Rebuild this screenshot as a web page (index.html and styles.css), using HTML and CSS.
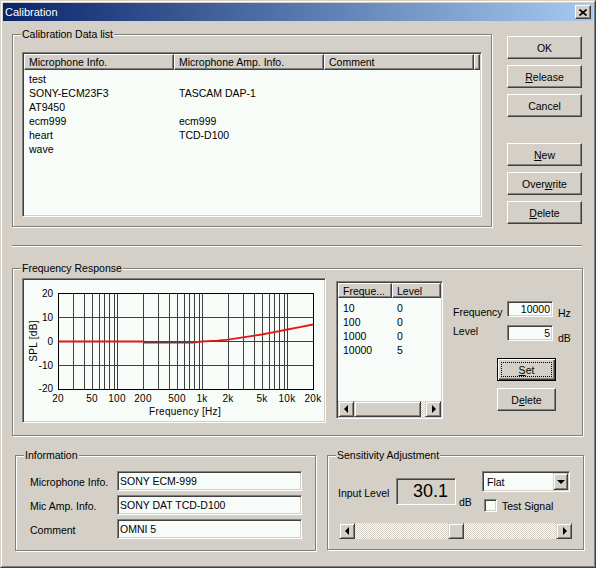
FILE: index.html
```html
<!DOCTYPE html>
<html lang="en">
<head>
    <meta charset="UTF-8">
    <meta name="viewport" content="width=device-width, initial-scale=1.0">
    <link rel="stylesheet" href="styles.css">
</head>
<body>
    <div class="window">
        <div class="frame">
            <!-- Title bar -->
            <div class="titlebar">
                <span class="title">Calibration</span>
                <button class="close-btn">
                    <svg width="8" height="7" viewBox="0 0 8 7">
                        <path d="M0.5 0.5L7.5 6.5M7.5 0.5L0.5 6.5" stroke="#000" stroke-width="1.6" fill="none"/>
                    </svg>
                </button>
            </div>

            <div class="content">
                <!-- Calibration data list + main buttons -->
                <div class="top-row">
                    <div class="group data-group">
                        <span class="legend">Calibration Data list</span>
                        <div class="listview sunken">
                            <div class="lv-header">
                                <div class="hd-col">Microphone Info.</div>
                                <div class="hd-col">Microphone Amp. Info.</div>
                                <div class="hd-col">Comment</div>
                                <div class="hd-col hd-filler"></div>
                            </div>
                            <div class="lv-body">
                                <div class="lv-row"><span>test</span><span></span><span></span></div>
                                <div class="lv-row"><span>SONY-ECM23F3</span><span>TASCAM DAP-1</span><span></span></div>
                                <div class="lv-row"><span>AT9450</span><span></span><span></span></div>
                                <div class="lv-row"><span>ecm999</span><span>ecm999</span><span></span></div>
                                <div class="lv-row"><span>heart</span><span>TCD-D100</span><span></span></div>
                                <div class="lv-row"><span>wave</span><span></span><span></span></div>
                            </div>
                        </div>
                    </div>

                    <div class="side-buttons">
                        <button class="btn">OK</button>
                        <button class="btn"><u>R</u>elease</button>
                        <button class="btn">Cancel</button>
                        <button class="btn btn-spaced"><u>N</u>ew</button>
                        <button class="btn">Over<u>w</u>rite</button>
                        <button class="btn"><u>D</u>elete</button>
                    </div>
                </div>

                <div class="separator"></div>

                <!-- Frequency response -->
                <div class="group freq-group">
                    <span class="legend">Frequency Response</span>

                    <div class="chart sunken">
                        <svg class="chart-svg" width="300" height="141" viewBox="0 0 300 141">
                            <g class="grid">
                                <path d="M49.5 13.5V109.5M60.5 13.5V109.5M68.5 13.5V109.5M75.5 13.5V109.5M80.5 13.5V109.5M85.5 13.5V109.5M90.5 13.5V109.5M93.5 13.5V109.5
                                         M119.5 13.5V109.5M134.5 13.5V109.5M145.5 13.5V109.5M153.5 13.5V109.5M160.5 13.5V109.5M165.5 13.5V109.5M170.5 13.5V109.5M175.5 13.5V109.5M178.5 13.5V109.5
                                         M204.5 13.5V109.5M219.5 13.5V109.5M230.5 13.5V109.5M238.5 13.5V109.5M245.5 13.5V109.5M250.5 13.5V109.5M255.5 13.5V109.5M260.5 13.5V109.5M263.5 13.5V109.5
                                         M34.5 37.5H289.5M34.5 61.5H289.5M34.5 85.5H289.5"/>
                            </g>
                            <rect class="plot-border" x="34.5" y="13.5" width="255" height="96"/>
                            <path class="curve" d="M34.5 61.5H119.5V62.5"/>
                            <path class="curve-dark" d="M119.5 62.5H169"/>
                            <path class="curve" d="M169 62.5L178.4 61.5L193.4 60.7L204 59.6L219 57.4L237.8 54.5L250.2 52.1L263.4 49.5L275.8 47.1L289 44.5"/>

                            <g class="tick-y">
                                <text x="29" y="17">20</text>
                                <text x="29" y="41">10</text>
                                <text x="29" y="65">0</text>
                                <text x="29" y="89">-10</text>
                                <text x="29" y="112">-20</text>
                            </g>
                            <g class="tick-x">
                                <text x="34" y="122">20</text>
                                <text x="68" y="122">50</text>
                                <text x="93" y="122">100</text>
                                <text x="119" y="122">200</text>
                                <text x="153" y="122">500</text>
                                <text x="178" y="122">1k</text>
                                <text x="204" y="122">2k</text>
                                <text x="238" y="122">5k</text>
                                <text x="263" y="122">10k</text>
                                <text x="289" y="122">20k</text>
                            </g>
                            <text class="axis-title" x="161" y="135">Frequency [Hz]</text>
                            <text class="axis-title" transform="translate(13,61) rotate(-90)">SPL [dB]</text>
                        </svg>
                    </div>

                    <div class="freqlist sunken">
                        <div class="fl-header">
                            <div class="hd-col fl-col1">Freque...</div>
                            <div class="hd-col fl-col2">Level</div>
                        </div>
                        <div class="fl-body">
                            <div class="fl-row"><span>10</span><span>0</span></div>
                            <div class="fl-row"><span>100</span><span>0</span></div>
                            <div class="fl-row"><span>1000</span><span>0</span></div>
                            <div class="fl-row"><span>10000</span><span>5</span></div>
                        </div>
                        <div class="hscroll">
                            <div class="arrow-btn"><span class="tri-left"></span></div>
                            <div class="scroll-thumb"></div>
                            <div class="scroll-track"></div>
                            <div class="arrow-btn"><span class="tri-right"></span></div>
                        </div>
                    </div>

                    <div class="freq-side">
                        <div class="field-row">
                            <span class="fr-label">Frequency</span>
                            <div class="num-input sunken">10000</div>
                            <span class="fr-unit">Hz</span>
                        </div>
                        <div class="field-row row-level">
                            <span class="fr-label">Level</span>
                            <div class="num-input sunken">5</div>
                            <span class="fr-unit">dB</span>
                        </div>
                        <button class="btn btn-small btn-default"><u>S</u>et</button>
                        <button class="btn btn-small btn-del">D<u>e</u>lete</button>
                    </div>
                </div>

                <!-- Bottom: information + sensitivity -->
                <div class="bottom-row">
                    <div class="group info-group">
                        <span class="legend">Information</span>
                        <div class="info-row">
                            <span class="info-label">Microphone Info.</span>
                            <div class="text-input sunken">SONY ECM-999</div>
                        </div>
                        <div class="info-row">
                            <span class="info-label">Mic Amp. Info.</span>
                            <div class="text-input sunken">SONY DAT TCD-D100</div>
                        </div>
                        <div class="info-row">
                            <span class="info-label">Comment</span>
                            <div class="text-input sunken">OMNI 5</div>
                        </div>
                    </div>

                    <div class="group sens-group">
                        <span class="legend">Sensitivity Adjustment</span>
                        <div class="sens-top">
                            <div class="level-part">
                                <span class="level-label">Input Level</span>
                                <div class="level-box sunken">30.1</div>
                                <span class="level-unit">dB</span>
                            </div>
                            <div class="signal-part">
                                <div class="combo sunken">
                                    <span class="combo-text">Flat</span>
                                    <div class="combo-btn"><span class="tri-down"></span></div>
                                </div>
                                <div class="check-row">
                                    <div class="checkbox sunken"></div>
                                    <span class="check-label">Test Signal</span>
                                </div>
                            </div>
                        </div>
                        <div class="slider">
                            <div class="arrow-btn"><span class="tri-left"></span></div>
                            <div class="slider-track">
                                <div class="slider-thumb"></div>
                            </div>
                            <div class="arrow-btn"><span class="tri-right"></span></div>
                        </div>
                    </div>
                </div>
            </div>
        </div>
    </div>
</body>
</html>
```

FILE: styles.css
```css
* {
    margin: 0;
    padding: 0;
    box-sizing: border-box;
}

body {
    width: 596px;
    height: 568px;
    overflow: hidden;
    background: #d4d0c8;
    font-family: "Liberation Sans", Arial, sans-serif;
    font-size: 10.5px;
    color: #000;
}

button {
    font: inherit;
    color: #000;
}

u {
    text-decoration: underline;
    text-underline-offset: 1px;
}

/* Window chrome */
.window {
    width: 596px;
    height: 568px;
    border: 1px solid;
    border-color: #d4d0c8 #404040 #404040 #d4d0c8;
}

.frame {
    height: 100%;
    border: 1px solid;
    border-color: #fff #808080 #808080 #fff;
    padding: 1px;
}

.titlebar {
    height: 18px;
    display: flex;
    align-items: center;
    padding: 0 2px;
    background: linear-gradient(to right, #0a246a, #a6caf0);
}

.title {
    color: #fff;
    font-size: 11px;
}

.close-btn {
    margin-left: auto;
    width: 16px;
    height: 14px;
    display: flex;
    align-items: center;
    justify-content: center;
    background: #d4d0c8;
    border: 1px solid;
    border-color: #fff #404040 #404040 #fff;
    box-shadow: inset -1px -1px #808080;
}

/* Shared widgets */
.sunken {
    border: 1px solid;
    border-color: #808080 #fff #fff #808080;
    box-shadow: inset 1px 1px #404040, inset -1px -1px #d4d0c8;
    padding: 1px;
}

.btn {
    width: 75px;
    height: 23px;
    display: flex;
    align-items: center;
    justify-content: center;
    background: #d4d0c8;
    border: 1px solid;
    border-color: #fff #404040 #404040 #fff;
    box-shadow: inset -1px -1px #808080;
}

.group {
    position: relative;
    border: 1px solid #808080;
    box-shadow: 1px 1px 0 #fff, inset 1px 1px 0 #fff;
}

.legend {
    position: absolute;
    top: -7px;
    left: 8px;
    padding: 0 1px;
    line-height: 13px;
    background: #d4d0c8;
}

.hd-col {
    height: 100%;
    line-height: 14px;
    padding-left: 4px;
    background: #d4d0c8;
    border: 1px solid;
    border-color: #fff #404040 #404040 #fff;
    box-shadow: inset -1px -1px #808080;
    white-space: nowrap;
    overflow: hidden;
}

.arrow-btn {
    width: 16px;
    height: 16px;
    flex: none;
    display: flex;
    align-items: center;
    justify-content: center;
    background: #d4d0c8;
    border: 1px solid;
    border-color: #d4d0c8 #404040 #404040 #d4d0c8;
    box-shadow: inset 1px 1px #fff, inset -1px -1px #808080;
}

.tri-left {
    width: 0;
    height: 0;
    border-top: 4px solid transparent;
    border-bottom: 4px solid transparent;
    border-right: 4px solid #000;
    margin-right: 1px;
}

.tri-right {
    width: 0;
    height: 0;
    border-top: 4px solid transparent;
    border-bottom: 4px solid transparent;
    border-left: 4px solid #000;
    margin-left: 1px;
}

.tri-down {
    width: 0;
    height: 0;
    border-left: 4px solid transparent;
    border-right: 4px solid transparent;
    border-top: 4px solid #000;
}

.content {
    padding-left: 9px;
}

/* Calibration data list */
.top-row {
    display: flex;
    align-items: flex-start;
    margin-top: 13px;
}

.data-group {
    width: 480px;
    height: 193px;
    padding: 17px 9px 9px 9px;
}

.listview {
    width: 460px;
    height: 165px;
    background: #f8fcf8;
}

.lv-header {
    display: flex;
    height: 16px;
}

.lv-header .hd-col {
    width: 150px;
}

.lv-header .hd-filler {
    width: 6px;
    padding: 0;
}

.lv-body {
    padding: 2px 0 0 5px;
}

.lv-row {
    display: grid;
    grid-template-columns: 150px 150px 150px;
    line-height: 14px;
    white-space: nowrap;
}

.side-buttons {
    display: flex;
    flex-direction: column;
    gap: 6px;
    margin: 2px 0 0 15px;
}

.side-buttons .btn-spaced {
    margin-top: 20px;
}

.separator {
    width: 570px;
    height: 2px;
    margin-top: 18px;
    border-top: 1px solid #808080;
    border-bottom: 1px solid #fff;
}

/* Frequency response */
.freq-group {
    display: flex;
    align-items: flex-start;
    width: 571px;
    height: 168px;
    margin-top: 21px;
    padding: 9px;
}

.chart {
    width: 304px;
    height: 145px;
    background: #f8fcf8;
}

.chart-svg {
    display: block;
}

.grid path {
    stroke: #404040;
    stroke-width: 1;
    fill: none;
    shape-rendering: crispEdges;
}

.plot-border {
    fill: none;
    stroke: #000;
    stroke-width: 1;
    shape-rendering: crispEdges;
}

.curve {
    fill: none;
    stroke: #e01818;
    stroke-width: 1.8;
}

.curve-dark {
    fill: none;
    stroke: #6a3a48;
    stroke-width: 1.8;
}

.tick-y text,
.tick-x text,
.axis-title {
    font-family: "Liberation Sans", Arial, sans-serif;
    font-size: 10px;
    fill: #000;
}

.tick-y text {
    text-anchor: end;
}

.tick-x text,
.axis-title {
    text-anchor: middle;
    letter-spacing: 0.3px;
}

.freqlist {
    width: 107px;
    height: 138px;
    margin: 3px 0 0 10px;
    background: #f8fcf8;
    display: flex;
    flex-direction: column;
}

.fl-header {
    display: flex;
    height: 15px;
    flex: none;
}

.fl-col1 {
    width: 54px;
}

.fl-col2 {
    flex: 1;
}

.fl-body {
    flex: 1;
    padding: 3px 0 0 5px;
}

.fl-row {
    display: grid;
    grid-template-columns: 54px auto;
    line-height: 14px;
}

.hscroll {
    display: flex;
    height: 16px;
    flex: none;
}

.scroll-thumb {
    width: 67px;
    background: #d4d0c8;
    border: 1px solid;
    border-color: #d4d0c8 #404040 #404040 #d4d0c8;
    box-shadow: inset 1px 1px #fff, inset -1px -1px #808080;
}

.scroll-track,
.slider-track {
    flex: 1;
    background: repeating-conic-gradient(#fff 0 25%, #d4d0c8 0 50%) 0 0 / 2px 2px;
}

.freq-side {
    margin-left: 10px;
    padding-top: 23px;
    display: flex;
    flex-direction: column;
    align-items: flex-start;
}

.field-row {
    display: flex;
    align-items: flex-start;
    height: 16px;
}

.row-level {
    margin-top: 8px;
}

.fr-label {
    width: 54px;
    line-height: 16px;
    margin-top: 3px;
}

.row-level .fr-label {
    margin-top: -2px;
}

.fr-unit {
    margin-left: 5px;
    line-height: 16px;
    margin-top: 4px;
}

.row-level .fr-unit {
    margin-top: 5px;
}

.num-input {
    width: 46px;
    height: 16px;
    background: #f8fcf8;
    text-align: right;
    padding: 0 2px 0 0;
    line-height: 14px;
}

.btn-small {
    width: 59px;
    margin-left: 44px;
}

.btn-default {
    position: relative;
    margin-top: 17px;
    border: 1px solid #000;
    box-shadow: inset 1px 1px #fff, inset -1px -1px #404040, inset -2px -2px #808080;
}

.btn-default::after {
    content: "";
    position: absolute;
    top: 3px;
    left: 3px;
    right: 3px;
    bottom: 3px;
    border: 1px dotted #000;
}

.btn-del {
    margin-top: 7px;
}

/* Bottom row */
.bottom-row {
    display: flex;
    align-items: flex-start;
    margin-top: 19px;
}

.info-group {
    width: 301px;
    height: 96px;
    margin-left: 3px;
    padding: 15px 0 0 14px;
    display: flex;
    flex-direction: column;
    gap: 4px;
}

.info-row {
    display: flex;
    align-items: center;
    height: 20px;
}

.info-label {
    width: 87px;
    padding-top: 2px;
}

.text-input {
    width: 185px;
    height: 20px;
    background: #f8fcf8;
    padding-left: 2px;
    line-height: 16px;
}

.sens-group {
    width: 257px;
    height: 95px;
    margin-left: 11px;
    padding: 15px 0 0 10px;
}

.sens-top {
    display: flex;
    height: 52px;
}

.level-part {
    width: 144px;
    display: flex;
    align-items: flex-start;
}

.level-label {
    width: 58px;
    margin-top: 16px;
    line-height: 12px;
}

.level-box {
    width: 60px;
    height: 27px;
    margin-top: 7px;
    display: flex;
    align-items: center;
    justify-content: flex-end;
    padding-right: 7px;
    font-size: 18px;
}

.level-unit {
    margin: 25px 0 0 3px;
    line-height: 12px;
}

.signal-part {
    display: flex;
    flex-direction: column;
}

.combo {
    width: 88px;
    height: 21px;
    background: #f8fcf8;
    display: flex;
    align-items: center;
    padding: 1px;
}

.combo-text {
    flex: 1;
    padding-left: 3px;
}

.combo-btn {
    width: 15px;
    height: 17px;
    display: flex;
    align-items: center;
    justify-content: center;
    background: #d4d0c8;
    border: 1px solid;
    border-color: #d4d0c8 #404040 #404040 #d4d0c8;
    box-shadow: inset 1px 1px #fff, inset -1px -1px #808080;
}

.check-row {
    display: flex;
    align-items: center;
    margin-top: 6px;
}

.checkbox {
    width: 13px;
    height: 13px;
    margin-left: 2px;
    background: #f8fcf8;
}

.check-label {
    margin-left: 5px;
    padding-top: 2px;
}

.slider {
    display: flex;
    width: 233px;
    height: 16px;
    margin-left: 1px;
}

.slider-track {
    display: flex;
}

.slider-thumb {
    width: 16px;
    height: 16px;
    margin-left: 93px;
    background: #d4d0c8;
    border: 1px solid;
    border-color: #d4d0c8 #404040 #404040 #d4d0c8;
    box-shadow: inset 1px 1px #fff, inset -1px -1px #808080;
}
```
